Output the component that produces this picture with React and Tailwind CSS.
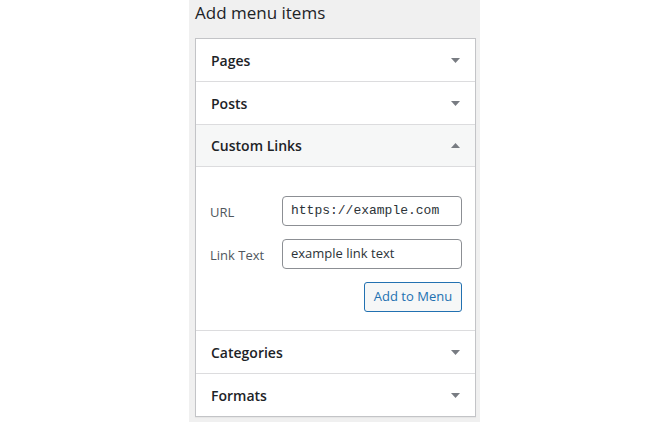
import React from 'react';

const Arrow = ({ up }) => (
  <svg width="9" height="5" viewBox="0 0 9 5" className="text-[#787c82]">
    {up ? <path d="M0 5 L4.5 0 L9 5 Z" fill="currentColor" /> : <path d="M0 0 L9 0 L4.5 5 Z" fill="currentColor" />}
  </svg>
);

const Section = ({ title, open, children, last }) => (
  <div className={last ? '' : 'border-b border-[#dcdcde]'}>
    <div
      className={`h-[42px] flex items-center justify-between pl-[15px] pr-[15px] ${
        open ? 'bg-[#f6f7f7] border-b border-[#dcdcde]' : ''
      }`}
    >
      <span className="text-[14px] font-semibold text-[#1d2327]">{title}</span>
      <Arrow up={open} />
    </div>
    {children}
  </div>
);

export default function App() {
  return (
    <div className="w-[670px] h-[422px] bg-white font-['Open_Sans',sans-serif] overflow-hidden">
      <div className="ml-[189px] w-[291px] h-full bg-[#f0f0f0] pl-[6px] pr-[4px]">
        <h2 className="h-[38px] text-[17px] font-medium leading-[26px] text-[#1d2327]">Add menu items</h2>
        <div className="bg-white border border-[#c3c4c7] shadow-[0_1px_1px_rgba(0,0,0,0.04)]">
          <Section title="Pages" />
          <Section title="Posts" />
          <Section title="Custom Links" open>
            <div className="pt-[29px] pb-[18px] pl-[14px] pr-[13px] flex flex-col">
              <div className="flex items-center">
                <label className="w-[72px] pt-[4px] text-[13px] text-[#50575e]">URL</label>
                <div className="w-[180px] h-[30px] border border-[#8c8f94] rounded-[4px] flex items-center px-[8px] font-['Liberation_Mono',monospace] text-[13px] text-[#2c3338]">
                  https://example.com
                </div>
              </div>
              <div className="flex items-center mt-[13px]">
                <label className="w-[72px] pt-[4px] text-[13px] text-[#50575e]">Link Text</label>
                <div className="w-[180px] h-[30px] border border-[#8c8f94] rounded-[4px] flex items-center px-[8px] text-[13px] text-[#2c3338]">
                  example link text
                </div>
              </div>
              <div className="flex justify-end mt-[13px]">
                <button className="w-[98px] h-[30px] border border-[#2271b1] rounded-[3px] bg-[#f6f7f7] text-[#2271b1] text-[13px]">
                  Add to Menu
                </button>
              </div>
            </div>
          </Section>
          <Section title="Categories" />
          <Section title="Formats" last />
        </div>
      </div>
    </div>
  );
}
